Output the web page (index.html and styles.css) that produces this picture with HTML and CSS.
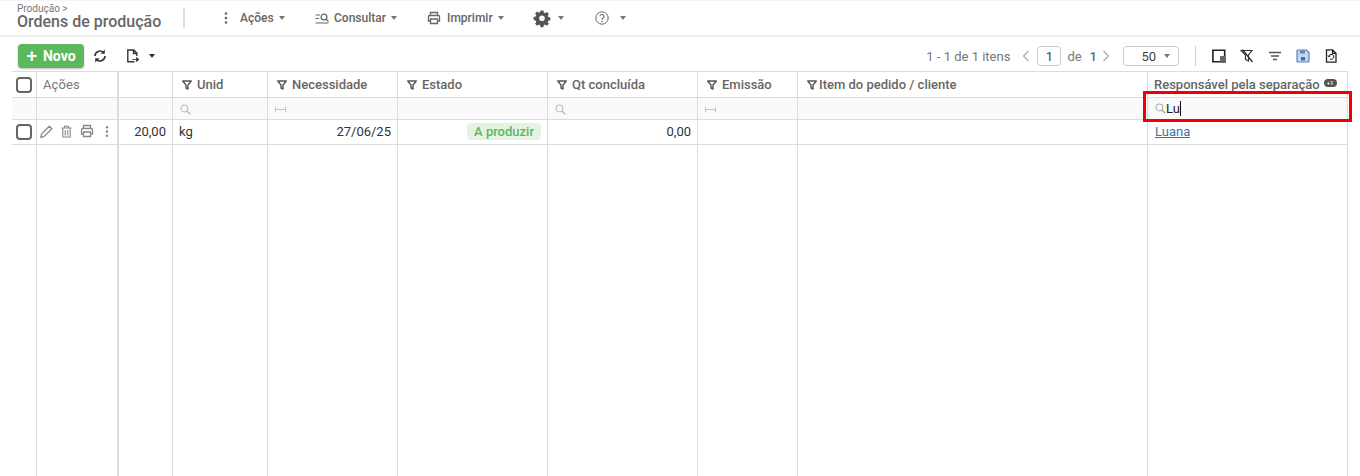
FILE: index.html
```html
<!DOCTYPE html>
<html lang="pt-BR">
<head>
<meta charset="utf-8">
<title>Ordens de produção</title>
<link rel="stylesheet" href="styles.css">
</head>
<body>
<svg class="defs" width="0" height="0" aria-hidden="true">
  <defs>
    <symbol id="funnel" viewBox="0 0 10 10"><path d="M.7 1h8.6L6 5v4L4 8V5z" fill="none" stroke="currentColor" stroke-width="1.4" stroke-linejoin="round"/></symbol>
    <symbol id="search" viewBox="0 0 11 11"><circle cx="4.4" cy="4.4" r="3.4" fill="none" stroke="currentColor" stroke-width="1.1"/><path d="M7 7l3.3 3.3" stroke="currentColor" stroke-width="1.4"/></symbol>
    <symbol id="range" viewBox="0 0 11 7"><path d="M.5 1v5M10.500 1v5M.5 3.500h10" fill="none" stroke="currentColor" stroke-width="1"/></symbol>
    <symbol id="printer" viewBox="0 0 14 14"><path d="M3.500 4.500V1.500h7v3M3.500 10H1.500V5.500q0-1 1-1h9q1 0 1 1V10h-2M3.500 8h7v4.500h-7z" fill="none" stroke="currentColor" stroke-width="1.300"/></symbol>
    <symbol id="dots" viewBox="0 0 4 14"><circle cx="2" cy="2.500" r="1.300" fill="currentColor"/><circle cx="2" cy="7" r="1.300" fill="currentColor"/><circle cx="2" cy="11.500" r="1.300" fill="currentColor"/></symbol>
  </defs>
</svg>

<header class="topbar">
  <div class="brand">
    <div class="crumb">Produção &gt;</div>
    <div class="title">Ordens de produção</div>
  </div>
  <span class="brand-sep"></span>
  <nav class="menu">
    <span class="menu-item m-acoes"><svg class="i-dots"><use href="#dots"/></svg>Ações<i class="caret"></i></span>
    <span class="menu-item m-consultar">
      <svg class="i-consult" viewBox="0 0 15 11"><path d="M.5 2h4.500M.5 5.500h3.500M.5 10h13" fill="none" stroke="currentColor" stroke-width="1"/><circle cx="9" cy="4" r="2.900" fill="none" stroke="currentColor" stroke-width="1.200"/><path d="M11 6l2.500 2.500" stroke="currentColor" stroke-width="1.300"/></svg>Consultar<i class="caret"></i></span>
    <span class="menu-item m-imprimir"><svg class="i-print"><use href="#printer"/></svg>Imprimir<i class="caret"></i></span>
    <span class="menu-item m-gear">
      <svg class="i-gear" viewBox="0 0 16 16"><path fill="currentColor" fill-rule="evenodd" d="M6.600.500h2.800l.4 2.100 1.300.6 1.800-1.200 2 2-1.200 1.800.6 1.300 2.100.4v2.800l-2.100.4-.6 1.300 1.200 1.800-2 2-1.800-1.200-1.300.6-.4 2.100H6.600l-.4-2.100-1.300-.6-1.800 1.200-2-2 1.200-1.800-.6-1.300L-.4 9.800V7l2.100-.4.600-1.300L1.100 3.500l2-2 1.800 1.200 1.300-.6zM8 5.500a2.800 2.800 0 1 0 0 5.600 2.800 2.800 0 0 0 0-5.600z"/></svg><i class="caret"></i></span>
    <span class="menu-item m-help">
      <svg class="i-help" viewBox="0 0 14 14"><circle cx="7" cy="7" r="6.200" fill="none" stroke="currentColor" stroke-width="1"/><path d="M5 5.300a2 2 0 1 1 3 1.800c-.7.400-1 .8-1 1.600" fill="none" stroke="currentColor" stroke-width="1.100"/><circle cx="7" cy="10.500" r=".8" fill="currentColor"/></svg><i class="caret"></i></span>
  </nav>
</header>

<section class="toolbar">
  <div class="tools-left">
    <button class="btn-new"><span class="plus">+</span>Novo</button>
    <svg class="i-sync" viewBox="0 0 14 14"><path d="M2 7a5 5 0 0 1 8.300-3.700M12 7a5 5 0 0 1-8.300 3.700" fill="none" stroke="currentColor" stroke-width="1.600"/><path d="M11.800 .5v4.300H7.600zM2.200 13.500V9.200h4.200z" fill="currentColor"/></svg>
    <span class="export">
      <svg class="i-export" viewBox="0 0 15 15"><path d="M8.500 12.800H1.800V1h6l3 3v3M7.500 1v3.500h3.300" fill="none" stroke="currentColor" stroke-width="1.400"/><path d="M6 10.500h6M10.500 8.500l2.500 2-2.500 2z" fill="currentColor" stroke="currentColor" stroke-width=".8"/></svg>
      <i class="caret dark"></i>
    </span>
  </div>
  <div class="tools-right">
    <span class="count">1 - 1 de 1 itens</span>
    <svg class="chev" viewBox="0 0 8 12"><path d="M6.500 1L1.500 6l5 5" fill="none" stroke="currentColor" stroke-width="1.200"/></svg>
    <span class="page">1</span>
    <span class="de">de</span>
    <span class="total">1</span>
    <svg class="chev" viewBox="0 0 8 12"><path d="M1.500 1l5 5-5 5" fill="none" stroke="currentColor" stroke-width="1.200"/></svg>
    <span class="size">50<i class="caret"></i></span>
    <span class="sep"></span>
    <svg class="ti" viewBox="0 0 14 14"><path d="M8 12.700H.9V1.300h11.800V7" fill="none" stroke="#222" stroke-width="1.600"/><rect x="8" y="7" width="6" height="7" rx="1" fill="#666"/></svg>
    <svg class="ti" viewBox="0 0 14 14"><path d="M1 1.500h11L8.500 6v6L5.500 10.500V6z" fill="none" stroke="#333" stroke-width="1.200"/><path d="M2.500 .5L12.500 13" stroke="#333" stroke-width="1.300"/></svg>
    <svg class="ti" viewBox="0 0 14 14"><path d="M1 3.500h12M3 7h8M5 10.500h4" stroke="#555" stroke-width="1.500"/></svg>
    <svg class="ti" viewBox="0 0 14 14"><path d="M1 2q0-1 1-1h8.500L13 3.500V12q0 1-1 1H2q-1 0-1-1z" fill="#c3d5ea" stroke="#5b86b8" stroke-width="1.200"/><rect x="4" y="1.500" width="5" height="3" fill="#5b86b8"/><rect x="5" y="8" width="4" height="3.500" fill="#3f6fa8"/></svg>
    <svg class="ti" viewBox="0 0 14 14"><path d="M8.500 .8H2.500v12.400h9.500V4.300zM8.500 .8v3.500H12" fill="none" stroke="#222" stroke-width="1.300"/><path d="M4.800 7.500a2.500 2.500 0 1 1 1 2.400M4 6.500l.9 1.400 1.300-1" fill="none" stroke="#222" stroke-width="1"/></svg>
  </div>
</section>

<main class="grid-wrap">
  <table class="grid">
    <colgroup>
      <col class="c-check"><col class="c-actions"><col class="c-qty"><col class="c-unid"><col class="c-nec"><col class="c-est"><col class="c-qt"><col class="c-emi"><col class="c-item"><col class="c-resp">
    </colgroup>
    <thead>
      <tr class="head">
        <th><span class="check"></span></th>
        <th class="lbl-plain thick">Ações</th>
        <th></th>
        <th class="lbl"><svg class="fn"><use href="#funnel"/></svg>Unid</th>
        <th class="lbl"><svg class="fn"><use href="#funnel"/></svg>Necessidade</th>
        <th class="lbl"><svg class="fn"><use href="#funnel"/></svg>Estado</th>
        <th class="lbl"><svg class="fn"><use href="#funnel"/></svg>Qt concluída</th>
        <th class="lbl"><svg class="fn"><use href="#funnel"/></svg>Emissão</th>
        <th class="lbl tight"><svg class="fn"><use href="#funnel"/></svg>Item do pedido / cliente</th>
        <th class="lbl resp">Responsável pela separação<span class="badge">+1</span></th>
      </tr>
      <tr class="filter">
        <td></td>
        <td class="thick"></td>
        <td></td>
        <td><svg class="sr"><use href="#search"/></svg></td>
        <td><svg class="rg"><use href="#range"/></svg></td>
        <td></td>
        <td><svg class="sr"><use href="#search"/></svg></td>
        <td><svg class="rg"><use href="#range"/></svg></td>
        <td></td>
        <td class="active">
          <span class="active-cell"><svg class="sr near"><use href="#search"/></svg><span class="typed">Lu</span></span>
          <span class="redbox"></span>
        </td>
      </tr>
    </thead>
    <tbody>
      <tr class="data">
        <td><span class="check"></span></td>
        <td class="thick">
          <span class="row-actions">
            <svg class="ra" viewBox="0 0 13 13"><path d="M.8 12.300l.7-3.200L9.300 1.200l2.600 2.600L4 11.600z" fill="none" stroke="#888" stroke-width="1.300" stroke-linejoin="round"/></svg>
            <svg class="ra" viewBox="0 0 13 13"><path d="M1.500 3h10M4.500 3V1.200h4V3M2.800 3v9h7.400V3M5.200 5v5.500M7.800 5v5.500" fill="none" stroke="#888" stroke-width="1.100"/></svg>
            <svg class="ra print"><use href="#printer"/></svg>
            <svg class="ra-dots"><use href="#dots"/></svg>
          </span>
        </td>
        <td class="num">20,00</td>
        <td>kg</td>
        <td class="num">27/06/25</td>
        <td class="num"><span class="status">A produzir</span></td>
        <td class="num">0,00</td>
        <td></td>
        <td></td>
        <td class="cell-link"><a class="link" href="#">Luana</a></td>
      </tr>
      <tr class="filler"><td></td><td class="thick"></td><td></td><td></td><td></td><td></td><td></td><td></td><td></td><td></td></tr>
    </tbody>
  </table>
</main>
</body>
</html>
```
FILE: styles.css
```css
* { box-sizing: border-box; }
html, body { margin: 0; height: 100%; }
body {
  font-family: Roboto, "Liberation Sans", sans-serif;
  font-size: 13px;
  color: #333;
  background: #fff;
  overflow: hidden;
  display: flex;
  flex-direction: column;
  height: 476px;
}
.defs { position: absolute; }

.caret {
  display: inline-block;
  width: 0; height: 0;
  border-left: 3.500px solid transparent;
  border-right: 3.500px solid transparent;
  border-top: 4px solid #777;
}
.caret.dark { border-top-color: #333; }

/* top bar */
.topbar {
  height: 37px;
  flex: none;
  display: flex;
  align-items: center;
  padding-left: 17px;
  border-top: 1px solid #f5f5f5;
  border-bottom: 2px solid #eeeeee;
}
.brand { width: 166px; height: 26px; margin-top: 2px; }
.brand-sep { width: 2px; height: 20px; background: #ddd; }
.crumb { font-size: 10px; line-height: 7px; margin-top: -1px; color: #777; }
.title { font-size: 16px; font-weight: 500; line-height: 19px; color: #666; }
.menu { display: flex; align-items: center; color: #666; font-size: 12px; font-weight: 500; }
.menu-item { display: flex; align-items: center; }
.menu-item .caret { margin-left: 5px; }
.m-acoes { margin-left: 39px; width: 91px; }
.i-dots { width: 4px; height: 14px; margin-right: 12px; color: #666; }
.m-consultar { width: 112px; }
.i-consult { width: 15px; height: 11px; margin-right: 4px; }
.m-imprimir { width: 107px; }
.i-print { width: 14px; height: 14px; margin-right: 6px; }
.m-gear { width: 61px; }
.i-gear { width: 16px; height: 16px; color: #555; margin-right: 3px; overflow: visible; }
.i-help { width: 14px; height: 14px; margin-right: 6px; }

/* toolbar */
.toolbar {
  height: 34px;
  flex: none;
  display: flex;
  justify-content: space-between;
  align-items: center;
  padding: 4px 23px 0 18px;
}
.tools-left, .tools-right { display: flex; align-items: center; }
.btn-new {
  width: 66px; height: 24px;
  border: 0; border-radius: 4px;
  background: #5cb85c;
  box-shadow: 0 1px 2px rgba(0,0,0,.25);
  color: #fff;
  font: 700 14px Roboto, sans-serif;
  padding: 0;
  display: flex; align-items: center; justify-content: center;
}
.plus { font-size: 19px; font-weight: 500; line-height: 18px; margin-right: 6px; }
.i-sync { width: 14px; height: 14px; margin-left: 9px; color: #333; }
.export { display: flex; align-items: center; margin-left: 19px; }
.i-export { width: 15px; height: 15px; color: #333; }
.export .caret { margin-left: 8px; }

.tools-right { color: #777; padding-right: 0; }
.count { font-size: 13px; color: #777; margin-right: 12px; }
.chev { width: 8px; height: 12px; color: #aaa; }
.page {
  width: 24px; height: 20px; margin: 0 6px 0 7px;
  border: 1px solid #ccc; border-radius: 4px;
  display: flex; align-items: center; justify-content: center;
  color: #444;
}
.de { margin: 0 8px 0 0; }
.total { color: #3f6fa8; font-weight: 500; margin-right: 5px; }
.size {
  width: 56px; height: 20px; margin-left: 13px;
  border: 1px solid #ccc; border-radius: 4px;
  display: flex; align-items: center; justify-content: flex-end;
  padding-right: 8px; color: #444;
}
.size .caret { margin-left: 8px; }
.sep { width: 1px; height: 20px; background: #ccc; margin: 0 16px 0 16px; }
.ti { width: 14px; height: 14px; margin-right: 14px; }
.ti:last-child { margin-right: -1px; }

/* grid */
.grid-wrap { flex: 1; padding: 0 12px; min-height: 0; }
.grid {
  width: 1336px;
  height: 405px;
  table-layout: fixed;
  border-collapse: separate;
  border-spacing: 0;
  border-top: 1px solid #dcdcdc;
}
.c-check { width: 25px; }
.c-actions { width: 82px; }
.c-qty { width: 54px; }
.c-unid { width: 95px; }
.c-nec { width: 130px; }
.c-est { width: 150px; }
.c-qt { width: 150px; }
.c-emi { width: 100px; }
.c-item { width: 350px; }
.c-resp { width: 200px; }
.grid th, .grid td {
  padding: 0 6px;
  border-right: 1px solid #dcdcdc;
  border-bottom: 1px solid #dcdcdc;
  font-weight: 400;
  text-align: left;
  vertical-align: middle;
  white-space: nowrap;
  overflow: hidden;
}
.grid .thick { border-right-width: 2px; }
.head { height: 26px; }
.filter { height: 22px; }
.data { height: 25px; }
.filter td { background: #fafafa; }
.grid .data td { padding-bottom: 2px; }
.grid .filler td { border-bottom: 0; }
.filler { height: auto; }

.grid th:first-child, .grid td:first-child { padding: 0 0 0 4px; }
.grid .data td:first-child { padding-bottom: 0; }
.check {
  display: block;
  width: 16px; height: 16px;
  border: 2px solid #666; border-radius: 4px;
  background: #fff;
}
.lbl { color: #666; font-weight: 500 !important; font-size: 13px; }
.lbl-plain { color: #777; font-size: 13px; letter-spacing: .1px; }
.fn { width: 10px; height: 10px; color: #555; margin: 0 5px 0 3px; vertical-align: -1px; }
.tight .fn { margin: 0 2px 0 3px; }
.badge {
  display: inline-block;
  width: 13px; height: 8px;
  border-radius: 4px;
  background: #555; color: #fff;
  font-size: 6px; line-height: 8px;
  text-align: center;
  margin-left: 4px;
  vertical-align: 4px;
}

.sr { width: 11px; height: 11px; color: #bbb; margin-left: 1px; vertical-align: -2px; }
.rg { width: 11px; height: 7px; color: #c4c4c4; margin-left: 1px; }
.sr.near { color: #aaa; margin: 0 0 0 1px; }
.grid .active { padding: 0; overflow: visible; position: relative; border-bottom-color: #a9c4e4; }
.active-cell { display: flex; align-items: center; padding-left: 6px; height: 21px; }
.typed { color: #222; font-size: 13px; border-right: 1px solid #111; line-height: 15px; }
.redbox {
  position: absolute;
  left: -5px; right: -5px; top: -7px; bottom: -3px;
  border: 3px solid #f00000;
}

.row-actions { display: flex; align-items: center; margin-left: -3px; }
.ra { width: 13px; height: 13px; margin-right: 7px; }
.ra.print { width: 14px; height: 14px; color: #888; margin-right: 11px; }
.ra-dots { width: 4px; height: 13px; color: #888; }
.grid .num { text-align: right; color: #333; }
.status {
  display: inline-block;
  background: #e6f3e4;
  color: #5cb85c;
  font-weight: 500;
  border-radius: 4px;
  padding: 0 7px;
  line-height: 17px;
}
.grid .cell-link { padding-left: 7px; }
.link { color: #3f6fa8; text-decoration: underline; }
```
